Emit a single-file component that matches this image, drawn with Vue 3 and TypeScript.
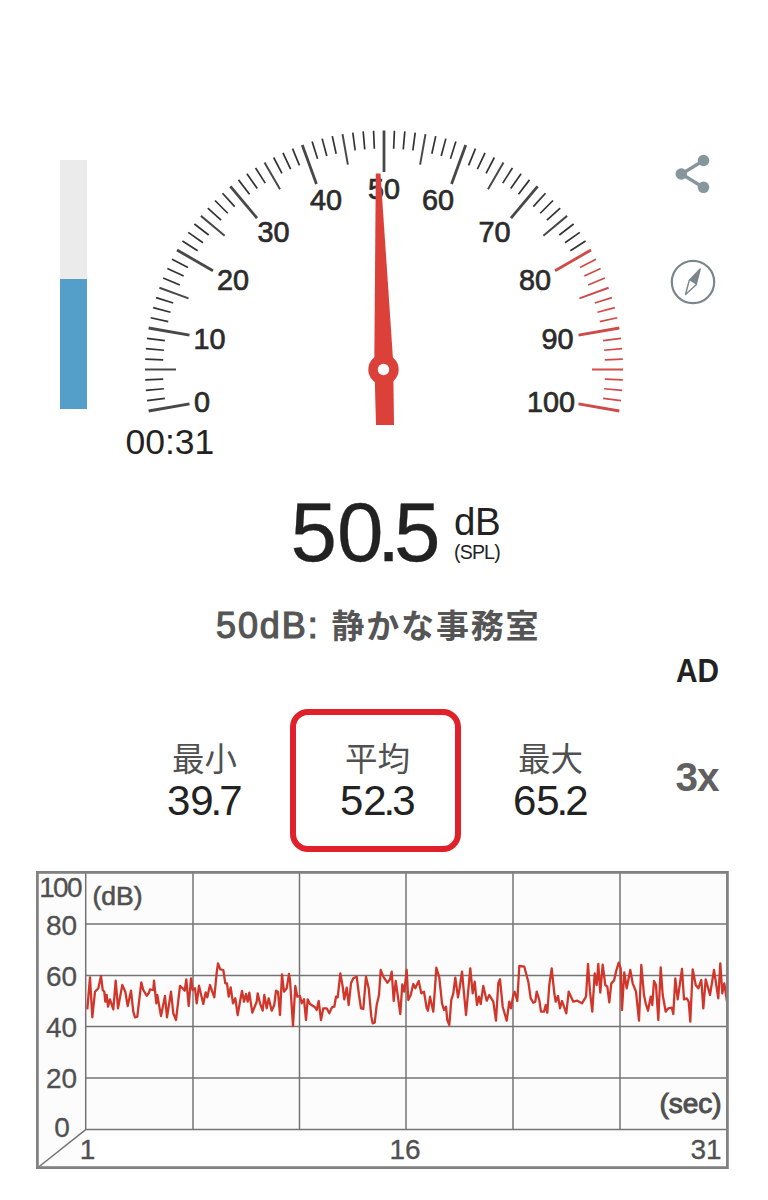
<script setup lang="ts">
interface Tick { x1: number; y1: number; x2: number; y2: number; kind: string; hot: boolean }
interface Label { text: string; x: number; y: number }

const cx = 384
const cy = 369.5
const radius = 239

const ticks: Tick[] = Array.from({ length: 81 }, (_, i) => {
  const angle = ((190 - i * 2.5) * Math.PI) / 180
  const kind = i % 8 === 0 ? 'major' : i % 4 === 0 ? 'mid' : 'minor'
  const inner = radius - (kind === 'major' ? 41.5 : kind === 'mid' ? 31 : 18)
  return {
    x1: cx + radius * Math.cos(angle),
    y1: cy - radius * Math.sin(angle),
    x2: cx + inner * Math.cos(angle),
    y2: cy - inner * Math.sin(angle),
    kind,
    hot: i >= 64,
  }
})

const gaugeLabels: Label[] = [
  { text: '0', x: 202, y: 412 },
  { text: '10', x: 209.5, y: 348.7 },
  { text: '20', x: 233, y: 290 },
  { text: '30', x: 273.5, y: 241.7 },
  { text: '40', x: 326, y: 209.5 },
  { text: '50', x: 384, y: 199 },
  { text: '60', x: 438, y: 209.5 },
  { text: '70', x: 494.5, y: 241.7 },
  { text: '80', x: 535, y: 289.7 },
  { text: '90', x: 557.5, y: 348.7 },
  { text: '100', x: 551, y: 412 },
]

const stats = [
  { name: '最小', value: '39.7', marked: false },
  { name: '平均', value: '52.3', marked: true },
  { name: '最大', value: '65.2', marked: false },
]

const gridX = [193, 299.5, 406, 513, 620]
const gridY = [924, 975.5, 1026.5, 1078]
const yLabels: Label[] = [
  { text: '80', x: 61.5, y: 934.5 },
  { text: '60', x: 61.5, y: 985.5 },
  { text: '40', x: 61.5, y: 1036.5 },
  { text: '20', x: 61.5, y: 1088 },
  { text: '0', x: 62, y: 1136.5 },
]

// Sound level samples, in thirds of a pixel from the origin of each stretch.
const stretches: { x: number; points: string }[] = [
  {
    x: 80,
    points:
      '22,208 30,112 37,232 45,155 55,145 63,108 68,150 73,155 76,185 80,165 84,200 90,178 100,208 107,122 114,205 127,135 136,155 143,198 153,152 160,215 165,232 172,230 184,127 190,150 200,167 207,158 210,148 220,150 222,122 229,190 232,165 243,228 255,168 261,232 273,155 280,220 288,240 300,138 308,145 314,152 319,118 326,198 333,115 338,150 345,145 350,190 357,137 370,192 377,157 382,172 390,135 403,172 410,98 414,70 421,88 430,90 436,130 441,130 446,170 452,142 459,190 466,175 473,225 480,185 486,153 492,185 498,162 503,185 508,158 517,218 530,185 533,160 540,190 548,212 553,165 560,205 566,175 575,212 583,195 588,152 594,155 600,225 606,103 612,155 620,145 627,102',
  },
  {
    x: 290,
    points:
      '0,120 9,258 16,138 22,170 30,168 35,190 42,178 48,240 53,178 60,192 75,202 80,210 86,183 93,240 100,205 110,205 118,220 126,202 133,200 138,170 143,172 151,100 158,140 163,178 170,143 176,195 183,130 190,115 200,110 207,165 213,205 220,207 228,110 236,145 244,230 248,250 254,248 260,195 267,165 272,90 280,110 292,128 300,118 305,95 311,183 317,123 323,165 331,222 337,133 343,155 350,90 355,180 362,165 370,132 376,145 386,123 394,160 402,155 410,205 414,212 420,170 430,215 436,130 439,83 448,112 456,190 462,210 468,200 472,240 478,255 484,180 490,160 496,113 504,172 508,150 516,95 528,225 541,85 548,160 554,125 561,195 567,170 572,192 580,138 590,182 598,165 610,185 618,242 625,130',
  },
  {
    x: 500,
    points:
      '0,118 8,200 20,242 28,185 33,205 40,165 44,155 52,183 58,78 73,80 85,125 92,175 100,188 106,185 110,155 118,180 123,215 132,215 137,195 142,218 148,135 155,85 163,160 167,185 174,168 180,205 186,183 199,220 206,155 213,170 220,185 232,182 246,190 258,170 264,72 270,155 277,215 284,100 290,135 295,72 301,158 308,74 316,135 322,140 328,187 334,130 342,122 348,95 356,68 362,85 366,210 373,97 380,145 391,90 398,130 408,155 417,242 424,75 432,165 437,190 444,212 452,170 457,195 462,123 468,135 475,240 482,82 488,165 497,215 505,205 515,203 520,222 526,115 533,178 546,87 552,178 560,175 566,185 571,245 578,88 587,135 595,145 604,120 610,205 617,118 630,165 642,90 655,175 661,70 667,160 673,130 681,185',
  },
]
const trace = stretches
  .flatMap((s) =>
    s.points.split(' ').map((p) => {
      const [x, y] = p.split(',').map(Number)
      return `${(s.x + x / 3).toFixed(1)},${(940 + y / 3).toFixed(1)}`
    }),
  )
  .join(' ')
</script>

<template>
  <main class="app">
    <section class="meter">
      <div class="level"><div class="level-fill"></div></div>
      <div class="dial">
        <svg class="gauge" width="520" height="320" viewBox="125 110 520 320">
          <line
            v-for="(t, i) in ticks"
            :key="i"
            :x1="t.x1"
            :y1="t.y1"
            :x2="t.x2"
            :y2="t.y2"
            :class="['tick', t.kind, { hot: t.hot }]"
          />
          <text v-for="l in gaugeLabels" :key="l.text" :x="l.x" :y="l.y" class="num">{{ l.text }}</text>
          <path class="needle" d="M375.8 173.5H380.5L393.2 362L394 425H376L374.3 362Z" />
          <circle class="needle" cx="383.5" cy="369.5" r="15.2" />
          <circle cx="383.5" cy="369.5" r="5.7" fill="#fff" />
        </svg>
        <div class="timer">00:31</div>
      </div>
      <div class="tools">
        <svg width="36" height="40" viewBox="675 154 36 40">
          <path d="M703.5 160.5L681.5 174L703.5 187.5" fill="none" stroke="#87959c" stroke-width="3.3" />
          <g fill="#87959c">
            <circle cx="703.5" cy="160.5" r="5.8" />
            <circle cx="681.3" cy="174" r="5.8" />
            <circle cx="703.5" cy="187.3" r="5.8" />
          </g>
        </svg>
        <svg width="46" height="46" viewBox="669.5 258.5 46 46">
          <circle cx="692.5" cy="281.5" r="21.2" fill="none" stroke="#7b868b" stroke-width="2.2" />
          <path d="M699.7 268.5L688.8 279.8L695.7 284.2Z" fill="#7b868b" />
          <path d="M699.7 268.5L688.8 279.8L685 294L695.7 284.2Z" fill="none" stroke="#7b868b" stroke-width="1.4" stroke-linejoin="round" />
        </svg>
      </div>
    </section>

    <section class="readout">
      <span class="value">5<span class="tight">0.</span>5</span>
      <span class="units"><span class="db">dB</span><span class="spl">(SPL)</span></span>
    </section>

    <p class="scene"><span class="scene-level">50dB:</span><span class="scene-name">静かな事務室</span></p>

    <section class="summary">
      <div class="stats">
        <div v-for="s in stats" :key="s.name" :class="['stat', { marked: s.marked }]">
          <span class="stat-name">{{ s.name }}</span>
          <span class="stat-value">{{ s.value[0] }}<span class="tight">{{ s.value.slice(1, 3) }}</span>{{ s.value[3] }}</span>
        </div>
      </div>
      <div class="side">
        <span class="ad">AD</span>
        <span class="zoom">3x</span>
      </div>
    </section>

    <svg class="chart" width="768" height="310" viewBox="0 866 768 310">
      <rect x="37.5" y="872.5" width="690" height="295" fill="#fcfcfc" />
      <rect x="80" y="1136" width="646" height="30" fill="#fff" />
      <g stroke="#747474" stroke-width="1.5">
        <line v-for="x in gridX" :key="x" :x1="x" :x2="x" y1="873" y2="1129.5" />
        <line v-for="y in gridY" :key="y" x1="85.7" x2="727" :y1="y" :y2="y" />
        <path d="M85.7 873V1129.6H727M85.7 1129.6L38 1167.5" fill="none" />
      </g>
      <polyline :points="trace" fill="none" stroke="#d0362a" stroke-width="2.3" stroke-linejoin="round" />
      <rect x="37.4" y="872.4" width="690" height="295.2" fill="none" stroke="#828282" stroke-width="2.8" />
      <text x="60" y="896.5" class="axis top-label">100</text>
      <text v-for="l in yLabels" :key="l.text" :x="l.x" :y="l.y" class="axis">{{ l.text }}</text>
      <text x="87.5" y="1159" class="axis">1</text>
      <text x="405" y="1159" class="axis">16</text>
      <text x="706" y="1159" class="axis">31</text>
      <text x="117.5" y="905" class="axis db-label">(dB)</text>
      <text x="690.5" y="1112.5" class="axis sec-label">(sec)</text>
    </svg>
  </main>
</template>

<style>
html,
body {
  margin: 0;
  background: #fff;
}
</style>

<style scoped>
.app {
  width: 768px;
  height: 1200px;
  overflow: hidden;
  display: flex;
  flex-direction: column;
  background: #fff;
  font-family: 'Liberation Sans', 'Noto Sans CJK JP', sans-serif;
  color: #222;
}
.meter {
  height: 480px;
  flex: none;
  display: grid;
  grid-template-columns: 125px 520px 123px;
}
.level {
  width: 27px;
  height: 249px;
  margin: 160px 0 0 60px;
  background: #ebebeb;
  display: flex;
  align-items: flex-end;
}
.level-fill {
  width: 100%;
  height: 130px;
  background: #549fc9;
}
.dial {
  padding-top: 110px;
}
.gauge {
  display: block;
}
.tick {
  stroke: #484848;
}
.tick.major {
  stroke-width: 2.8;
}
.tick.mid {
  stroke-width: 2;
}
.tick.minor {
  stroke-width: 1.7;
  stroke: #333;
}
.tick.hot {
  stroke: #cf4b48;
}
.num {
  font-size: 28.8px;
  text-anchor: middle;
  fill: #2b2b2b;
  stroke: #2b2b2b;
  stroke-width: 0.7;
}
.needle {
  fill: #db4039;
}
.timer {
  height: 36px;
  line-height: 36px;
  margin: -6px 0 0 0.5px;
  font-size: 35.5px;
}
.tools {
  display: flex;
  flex-direction: column;
  gap: 64.5px;
  padding: 154px 0 0 24.5px;
}
.tools svg:first-child {
  margin-left: 5.5px;
}
.readout {
  flex: none;
  height: 60px;
  margin: 22px 0 0 290.5px;
  display: flex;
}
.value {
  width: 163.5px;
  font-size: 83.5px;
  line-height: 60px;
  -webkit-text-stroke: 0.3px #222;
}
.value .tight {
  letter-spacing: -6.3px;
}
.units {
  display: flex;
  flex-direction: column;
}
.db {
  font-size: 38.5px;
  line-height: 40px;
  letter-spacing: -0.5px;
}
.spl {
  font-size: 19.5px;
  line-height: 20px;
  letter-spacing: -0.8px;
}
.scene {
  flex: none;
  height: 40px;
  margin: 44px 0 0 216px;
  display: flex;
  line-height: 40px;
  color: #555;
}
.scene-level {
  width: 115.5px;
  font-size: 36px;
  letter-spacing: 1.9px;
  -webkit-text-stroke: 1.2px #555;
}
.scene-name {
  font-family: 'Noto Sans CJK JP', sans-serif;
  font-weight: 700;
  font-size: 33px;
  line-height: 37px;
  letter-spacing: 1.8px;
}
.summary {
  flex: none;
  display: flex;
  height: 220px;
}
.stats {
  display: flex;
  gap: 2px;
  margin: 63px 0 0 117px;
}
.stat {
  box-sizing: border-box;
  width: 171px;
  height: 143px;
  border: 6px solid transparent;
  border-radius: 18px;
  padding-top: 21px;
  display: flex;
  flex-direction: column;
  align-items: center;
}
.stat.marked {
  border-color: #e0202a;
}
.stat-name {
  font-family: 'Noto Sans CJK JP', sans-serif;
  font-size: 32.5px;
  line-height: 42px;
  margin-left: 4px;
  color: #505050;
}
.stat-value {
  margin: 2px 0 0 4.5px;
  font-size: 42px;
  line-height: 42px;
}
.stat-value .tight {
  letter-spacing: -3px;
}
.side {
  display: flex;
  flex-direction: column;
  margin: 5px 0 0 41.5px;
  font-weight: 700;
}
.ad {
  font-size: 33.5px;
  line-height: 40px;
  transform: scaleX(0.89);
  transform-origin: left;
}
.zoom {
  margin-top: 63.5px;
  font-size: 40.5px;
  line-height: 44px;
  letter-spacing: -1px;
  color: #606060;
}
.chart {
  flex: none;
  display: block;
}
.axis {
  font-size: 28px;
  text-anchor: middle;
  fill: #505050;
  stroke: #505050;
  stroke-width: 0.3;
}
.top-label {
  letter-spacing: -1.7px;
}
.db-label {
  font-size: 26.5px;
  stroke-width: 0.6;
}
.sec-label {
  font-size: 28px;
  stroke-width: 1;
}
</style>
